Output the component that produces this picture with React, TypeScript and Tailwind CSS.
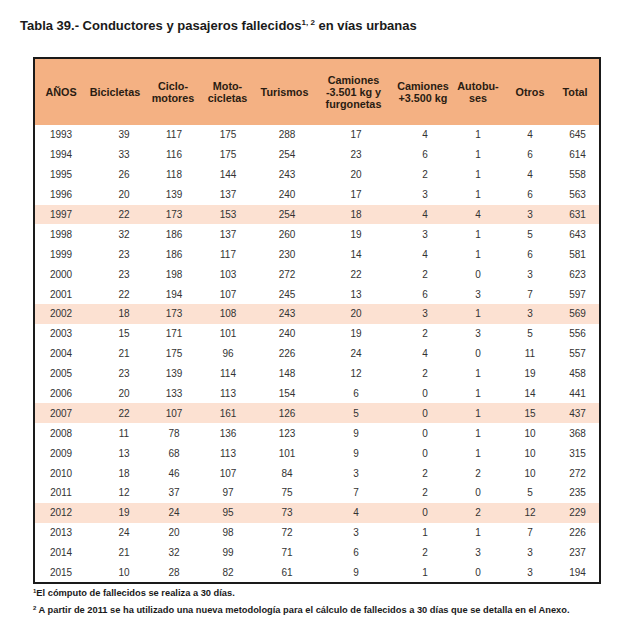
import React from "react";

const rows: (string | number)[][] = [
  [1993, 39, 117, 175, 288, 17, 4, 1, 4, 645],
  [1994, 33, 116, 175, 254, 23, 6, 1, 6, 614],
  [1995, 26, 118, 144, 243, 20, 2, 1, 4, 558],
  [1996, 20, 139, 137, 240, 17, 3, 1, 6, 563],
  [1997, 22, 173, 153, 254, 18, 4, 4, 3, 631],
  [1998, 32, 186, 137, 260, 19, 3, 1, 5, 643],
  [1999, 23, 186, 117, 230, 14, 4, 1, 6, 581],
  [2000, 23, 198, 103, 272, 22, 2, 0, 3, 623],
  [2001, 22, 194, 107, 245, 13, 6, 3, 7, 597],
  [2002, 18, 173, 108, 243, 20, 3, 1, 3, 569],
  [2003, 15, 171, 101, 240, 19, 2, 3, 5, 556],
  [2004, 21, 175, 96, 226, 24, 4, 0, 11, 557],
  [2005, 23, 139, 114, 148, 12, 2, 1, 19, 458],
  [2006, 20, 133, 113, 154, 6, 0, 1, 14, 441],
  [2007, 22, 107, 161, 126, 5, 0, 1, 15, 437],
  [2008, 11, 78, 136, 123, 9, 0, 1, 10, 368],
  [2009, 13, 68, 113, 101, 9, 0, 1, 10, 315],
  [2010, 18, 46, 107, 84, 3, 2, 2, 10, 272],
  [2011, 12, 37, 97, 75, 7, 2, 0, 5, 235],
  [2012, 19, 24, 95, 73, 4, 0, 2, 12, 229],
  [2013, 24, 20, 98, 72, 3, 1, 1, 7, 226],
  [2014, 21, 32, 99, 71, 6, 2, 3, 3, 237],
  [2015, 10, 28, 82, 61, 9, 1, 0, 3, 194],
];

const highlighted = new Set([1997, 2002, 2007, 2012]);

const colW = [
  "w-[52px]",
  "w-[59px]",
  "w-[54px]",
  "w-[55px]",
  "w-[62px]",
  "w-[73px]",
  "w-[64px]",
  "w-[48px]",
  "w-[54px]",
  "w-[43px]",
];

const dataPad = [
  "",
  "pl-[15px]",
  "pl-[2px]",
  "pl-[1px]",
  "pl-[2px]",
  "pl-[5px]",
  "pl-[6px]",
  "",
  "pl-[2px]",
  "",
];

const headers: React.ReactNode[] = [
  <>AÑOS</>,
  <>Bicicletas</>,
  <>
    Ciclo-
    <br />
    motores
  </>,
  <>
    Moto-
    <br />
    cicletas
  </>,
  <>Turismos</>,
  <>
    Camiones
    <br />
    -3.501 kg y
    <br />
    furgonetas
  </>,
  <>
    Camiones
    <br />
    +3.500 kg
  </>,
  <>
    Autobu-
    <br />
    ses
  </>,
  <>Otros</>,
  <>Total</>,
];

const headerPad = ["", "pr-[3px]", "", "", "pr-[3px]", "", "pl-[2px]", "", "pl-[2px]", "pr-[5px]"];

export default function App() {
  return (
    <div
      className="w-[630px] h-[633px] bg-white overflow-hidden"
      style={{ fontFamily: '"Liberation Sans", Arial, sans-serif' }}
    >
      <div className="pt-[18px] pl-[20px] text-[13px] font-bold leading-[16px] text-[#1a1a1a]">
        Tabla 39.- Conductores y pasajeros fallecidos
        <span className="text-[8px] leading-none align-top relative top-[1px]">1, 2</span> en vías urbanas
      </div>

      <div className="ml-[33px] mt-[23px] w-[568px] border-2 border-[#1a1a1a]">
        <div className="flex h-[66px] bg-[#f4b183] items-center text-[10.8px] font-bold leading-[12px] text-[#2a1c12]">
          {headers.map((h, i) => (
            <div key={i} className={`${colW[i]} ${headerPad[i]} text-center shrink-0`}>
              {h}
            </div>
          ))}
        </div>
        {rows.map((r) => (
          <div
            key={r[0] as number}
            className={`flex h-[19.9px] items-center text-[10px] text-[#333333] ${
              highlighted.has(r[0] as number) ? "bg-[#fce1d2]" : "bg-white"
            }`}
          >
            {r.map((v, i) => (
              <div key={i} className={`${colW[i]} ${dataPad[i]} text-center shrink-0`}>
                {v}
              </div>
            ))}
          </div>
        ))}
      </div>

      <div className="pl-[33px] pt-[4px] text-[9.3px] font-bold leading-[11px] text-[#1a1a1a]">
        <div>
          <span className="text-[6px] leading-none align-top">1</span>El cómputo de fallecidos se realiza a 30 días.
        </div>
        <div className="mt-[6px]">
          <span className="text-[6px] leading-none align-top">2</span> A partir de 2011 se ha utilizado una nueva
          metodología para el cálculo de fallecidos a 30 días que se detalla en el Anexo.
        </div>
      </div>
    </div>
  );
}
